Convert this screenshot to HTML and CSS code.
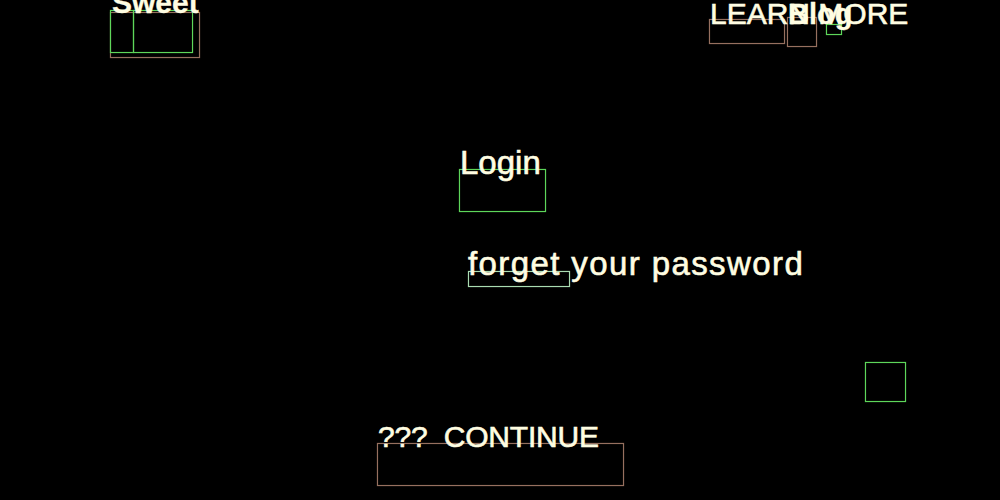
FILE: index.html
```html
<!DOCTYPE html>
<html>
<head>
<meta charset="utf-8">
<link rel="stylesheet" href="styles.css">
</head>
<body>
<div class="canvas">
  <div class="box brown b1"></div>
  <div class="box green b2"></div>
  <div class="box green b3"></div>
  <div class="box brown b4"></div>
  <div class="box brown b5"></div>
  <div class="box green b6"></div>
  <div class="box green b7"></div>
  <div class="box pale b8"></div>
  <div class="box green b9"></div>
  <div class="box brown b10"></div>

  <span class="label bold t-sweet">Sweet</span>
  <span class="label t-learn">LEARN MORE</span>
  <span class="label bold t-blog">Blog</span>
  <span class="label t-login">Login</span>
  <span class="label t-forget">forget your password</span>
  <span class="label t-continue">???&nbsp; CONTINUE</span>
</div>
</body>
</html>
```
FILE: styles.css
```css
html, body {
  margin: 0;
  padding: 0;
  background: #000;
}
.canvas {
  position: relative;
  width: 1000px;
  height: 500px;
  overflow: hidden;
  background: #000;
  font-family: "Liberation Sans", Arial, sans-serif;
}
.box {
  position: absolute;
  box-sizing: border-box;
  border: 1px solid;
}
.green {
  border-color: #5ed65a;
  box-shadow: 0 0 1px #3f9a3c, inset 0 0 1px #3f9a3c;
}
.brown {
  border-color: #96705f;
  box-shadow: 0 0 1px #6a4f43, inset 0 0 1px #6a4f43;
}
.pale {
  border-color: #aadcb2;
  box-shadow: 0 0 1px #6f9a76, inset 0 0 1px #6f9a76;
}

.b1 { left: 110px; top: 12px; width: 90px; height: 46px; }
.b2 { left: 110px; top: 10px; width: 24px; height: 43px; }
.b3 { left: 133px; top: 10px; width: 60px; height: 43px; }
.b4 { left: 709px; top: 19px; width: 76px; height: 25px; }
.b5 { left: 787px; top: 17px; width: 30px; height: 30px; }
.b6 { left: 826px; top: 24px; width: 16px; height: 11px; }
.b7 { left: 459px; top: 169px; width: 87px; height: 43px; }
.b8 { left: 468px; top: 271px; width: 102px; height: 16px; }
.b9 { left: 865px; top: 362px; width: 41px; height: 40px; }
.b10 { left: 377px; top: 443px; width: 247px; height: 43px; }

.label {
  position: absolute;
  color: #fffde2;
  white-space: nowrap;
  line-height: 1;
  -webkit-text-stroke: 0.6px #fffde2;
}
.bold { font-weight: bold; -webkit-text-stroke: 0.3px #fffde2; }
.t-sweet { left: 112px; top: -12px; font-size: 30px; }
.t-learn { left: 710px; top: -1px; font-size: 30px; }
.t-blog { left: 788px; top: 0px; font-size: 29px; }
.t-login { left: 460px; top: 146px; font-size: 33px; }
.t-forget { left: 468px; top: 247px; font-size: 33px; letter-spacing: 1.4px; }
.t-continue { left: 378px; top: 422px; font-size: 30px; letter-spacing: -0.2px; }
```
